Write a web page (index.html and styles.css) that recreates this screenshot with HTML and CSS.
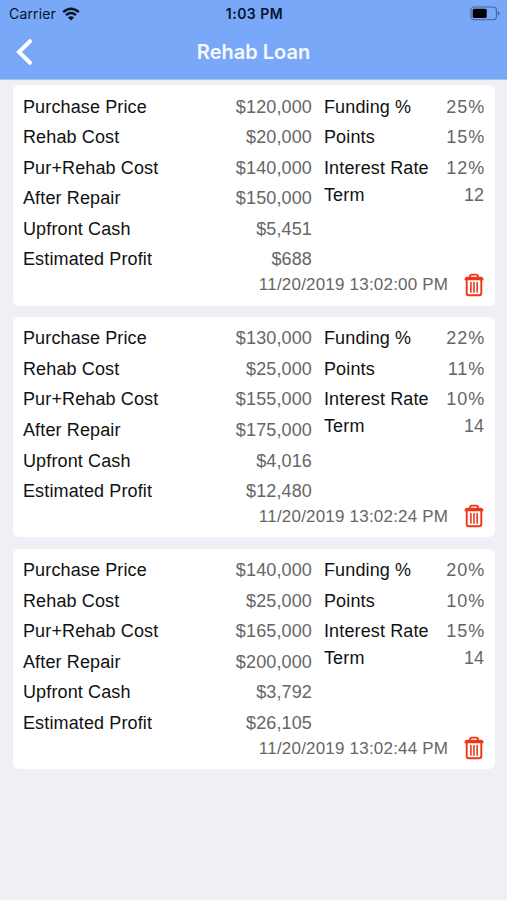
FILE: index.html
```html
<!DOCTYPE html>
<html lang="en">
<head>
<meta charset="utf-8">
<title>Rehab Loan</title>
<link rel="stylesheet" href="styles.css">
</head>
<body>
<svg class="defs" aria-hidden="true">
  <symbol id="trash" viewBox="0 0 20 24">
    <path d="M6 4.6V3.4Q6 1.7 7.8 1.7h4.4q1.8 0 1.8 1.7v1.2" fill="none" stroke="currentColor" stroke-width="1.8"/>
    <path d="M3 3.8h14q2.3 0 2.6 3.4H.4Q.7 3.8 3 3.8Z" fill="currentColor"/>
    <path d="M2.7 6v14.2q0 2 2 2h10.6q2 0 2-2V6" fill="none" stroke="currentColor" stroke-width="1.9"/>
    <path d="M6.9 9.5v9.6M10 9.5v9.6M13.1 9.5v9.6" fill="none" stroke="currentColor" stroke-width="1.6" stroke-linecap="round"/>
  </symbol>
</svg>
<header class="header">
  <div class="status">
    <div class="carrier"><span class="carrier-name">Carrier</span>
      <svg class="wifi" viewBox="0 0 18 14"><path d="M1.2 5.2Q9-1.6 16.8 5.2M4 8.2q5-4.2 10 0" fill="none" stroke="#081426" stroke-width="2.4"/><path d="M9 13.6 5.9 10.5q3.1-2.6 6.2 0Z" fill="#081426"/></svg>
    </div>
    <span class="clock">1:03 PM</span>
    <svg class="battery" viewBox="0 0 30 15"><rect x="1" y="1" width="25.4" height="12.8" rx="3.2" fill="none" stroke="#456695" stroke-width="1.1"/><rect x="2.7" y="2.7" width="14" height="9.4" rx="1.5" fill="#000"/><path d="M27.8 5.2q1.7.6 1.7 2.2t-1.7 2.2Z" fill="#456695"/></svg>
  </div>
  <div class="navbar">
    <svg class="back" viewBox="0 0 18 28"><path d="M15 3.2 4 14l11 10.8" fill="none" stroke="#fff" stroke-width="4" stroke-linecap="round" stroke-linejoin="miter"/></svg>
    <h1 class="title">Rehab Loan</h1>
  </div>
</header>
<main class="list">
  <article class="card">
    <div class="columns">
      <div class="costs">
        <div class="row"><span>Purchase Price</span><span class="value">$120,000</span></div>
        <div class="row"><span>Rehab Cost</span><span class="value">$20,000</span></div>
        <div class="row"><span>Pur+Rehab Cost</span><span class="value">$140,000</span></div>
        <div class="row"><span>After Repair</span><span class="value">$150,000</span></div>
        <div class="row"><span>Upfront Cash</span><span class="value">$5,451</span></div>
        <div class="row"><span>Estimated Profit</span><span class="value">$688</span></div>
      </div>
      <div class="terms">
        <div class="row"><span>Funding %</span><span class="value percent">25%</span></div>
        <div class="row"><span>Points</span><span class="value percent">15%</span></div>
        <div class="row"><span>Interest Rate</span><span class="value percent">12%</span></div>
        <div class="row term"><span>Term</span><span class="value">12</span></div>
      </div>
    </div>
    <div class="footer"><span class="date">11/20/2019 13:02:00 PM</span><svg class="trash"><use href="#trash"/></svg></div>
  </article>
  <article class="card">
    <div class="columns">
      <div class="costs">
        <div class="row"><span>Purchase Price</span><span class="value">$130,000</span></div>
        <div class="row"><span>Rehab Cost</span><span class="value">$25,000</span></div>
        <div class="row"><span>Pur+Rehab Cost</span><span class="value">$155,000</span></div>
        <div class="row"><span>After Repair</span><span class="value">$175,000</span></div>
        <div class="row"><span>Upfront Cash</span><span class="value">$4,016</span></div>
        <div class="row"><span>Estimated Profit</span><span class="value">$12,480</span></div>
      </div>
      <div class="terms">
        <div class="row"><span>Funding %</span><span class="value percent">22%</span></div>
        <div class="row"><span>Points</span><span class="value percent">11%</span></div>
        <div class="row"><span>Interest Rate</span><span class="value percent">10%</span></div>
        <div class="row term"><span>Term</span><span class="value">14</span></div>
      </div>
    </div>
    <div class="footer"><span class="date">11/20/2019 13:02:24 PM</span><svg class="trash"><use href="#trash"/></svg></div>
  </article>
  <article class="card">
    <div class="columns">
      <div class="costs">
        <div class="row"><span>Purchase Price</span><span class="value">$140,000</span></div>
        <div class="row"><span>Rehab Cost</span><span class="value">$25,000</span></div>
        <div class="row"><span>Pur+Rehab Cost</span><span class="value">$165,000</span></div>
        <div class="row"><span>After Repair</span><span class="value">$200,000</span></div>
        <div class="row"><span>Upfront Cash</span><span class="value">$3,792</span></div>
        <div class="row"><span>Estimated Profit</span><span class="value">$26,105</span></div>
      </div>
      <div class="terms">
        <div class="row"><span>Funding %</span><span class="value percent">20%</span></div>
        <div class="row"><span>Points</span><span class="value percent">10%</span></div>
        <div class="row"><span>Interest Rate</span><span class="value percent">15%</span></div>
        <div class="row term"><span>Term</span><span class="value">14</span></div>
      </div>
    </div>
    <div class="footer"><span class="date">11/20/2019 13:02:44 PM</span><svg class="trash"><use href="#trash"/></svg></div>
  </article>
</main>
</body>
</html>
```
FILE: styles.css
```css
* { box-sizing: border-box; }
body {
  margin: 0;
  min-height: 900px;
  background: #f0eff5;
  color: #111;
  font-family: "Liberation Sans", Arial, sans-serif;
  font-size: 18px;
  letter-spacing: 0.13px;
}
svg { display: block; flex: none; }
.defs { position: absolute; width: 0; height: 0; }
.header {
  height: 80px;
  background: #78a8f7;
  border-bottom: 1px solid #a9c3f0;
}
.status {
  display: grid;
  grid-template-columns: 1fr auto 1fr;
  align-items: center;
  height: 27px;
  padding: 0 7px 0 9px;
  font-family: Inter, sans-serif;
  color: #081426;
}
.carrier { display: flex; align-items: center; gap: 6px; }
.carrier-name { font-size: 14px; letter-spacing: 0.15px; }
.wifi { width: 18px; height: 14px; }
.clock { font-size: 14px; font-weight: 600; letter-spacing: 0.5px; }
.battery { width: 30px; height: 15px; justify-self: end; }
.navbar {
  display: grid;
  grid-template-columns: 1fr auto 1fr;
  align-items: center;
  height: 50px;
  padding: 0 15px;
}
.back { width: 18px; height: 28px; }
.title {
  margin: 0;
  color: #f5f9ff;
  font-family: Inter, sans-serif;
  font-size: 20px;
  font-weight: 600;
  letter-spacing: 0;
}
.list {
  display: flex;
  flex-direction: column;
  gap: 11.2px;
  padding: 5.3px 12px 0 12.6px;
}
.card {
  height: 220.5px;
  padding: 6.4px 10.8px 0 10.4px;
  border-radius: 6px;
  background: #fff;
}
.columns {
  display: grid;
  grid-template-columns: 289px 1fr;
  gap: 12px;
  height: 181px;
}
.row {
  display: flex;
  justify-content: space-between;
  height: 30.55px;
  line-height: 30.55px;
  white-space: nowrap;
}
.term { margin-top: -3.6px; }
.value, .date { color: #666; }
.percent { letter-spacing: 0.9px; margin-right: -0.9px; }
.footer {
  display: flex;
  justify-content: flex-end;
  align-items: center;
  gap: 16px;
  height: 24px;
}
.date { padding-top: 1px; font-size: 17px; letter-spacing: 0.2px; }
.trash { width: 20px; height: 24px; color: #ef3519; }
```
